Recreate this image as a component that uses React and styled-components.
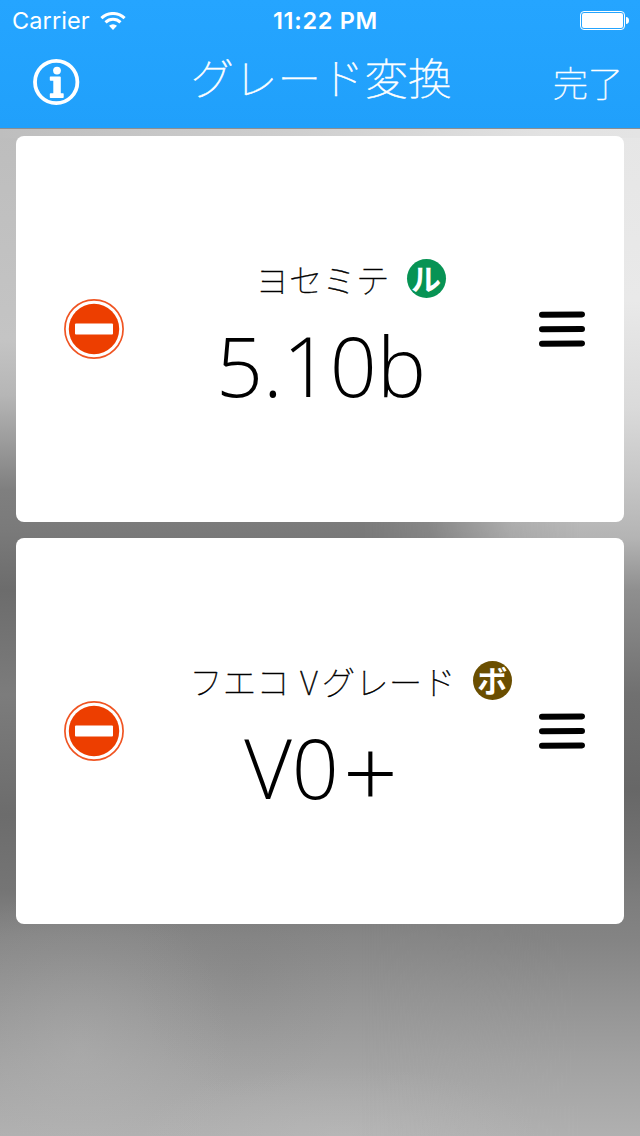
import React from "react";
import styled, { createGlobalStyle } from "styled-components";

const GlobalStyle = createGlobalStyle`
  * { box-sizing: border-box; }
  body { margin: 0; }
`;

const jp = `"Noto Sans CJK JP", sans-serif`;

const Screen = styled.div`
  position: relative;
  isolation: isolate;
  width: 640px;
  height: 1136px;
  overflow: hidden;
  background: linear-gradient(#bdbdbd 128px, #c4c4c4 340px, #b6b6b6 395px, #949494 455px, #7f7f7f 490px, #7a7a7a 530px, #6c6c6c 590px, #7c7c7c 695px, #6c6c6c 815px, #757575 890px, #868686 935px, #959595 1000px, #a2a2a2 1060px, #b0b0b0 1136px);
  &::before {
    content: "";
    position: absolute;
    inset: 0;
    z-index: -1;
    background: linear-gradient(#e6e6e6 128px, #e9e9e9 300px, #dadada 408px, #c6c6c6 481px, #b4b4b4 538px, #8f8f8f 590px, #707070 695px, #676767 789px, #727272 852px, #7e7e7e 904px, #848484 940px, #939393 1000px, #a1a1a1 1060px, #b0b0b0 1136px);
    mask-image: linear-gradient(90deg, transparent 360px, rgba(0, 0, 0, 0.2) 430px, rgba(0, 0, 0, 0.8) 510px, #000 580px);
  }
  &::after {
    content: "";
    position: absolute;
    inset: 0;
    z-index: -1;
    background:
      linear-gradient(90deg, #bebebe, #cecece 45%, #e2e2e2 85%, #e4e4e4) 0 128px / 100% 10px no-repeat,
      radial-gradient(150px 170px at 80px 1050px, rgba(190, 190, 190, 0.26), rgba(190, 190, 190, 0.08) 60%, transparent),
      radial-gradient(110px 130px at 245px 970px, rgba(110, 110, 110, 0.12), rgba(110, 110, 110, 0.04) 60%, transparent),
      radial-gradient(200px 70px at 340px 1136px, rgba(200, 200, 200, 0.25), transparent);
  }
`;

const Header = styled.header`
  height: 129px;
  color: #fff;
  background: linear-gradient(#25a5ff, #20a0fb);
  border-bottom: 1px solid #8b8f92;
`;

const StatusBar = styled.div`
  display: grid;
  grid-template-columns: 1fr auto 1fr;
  align-items: center;
  height: 40px;
  padding: 0 11px 0 12px;
  font: 400 23.5px/40px Inter, sans-serif;
`;

const Carrier = styled.div`
  display: flex;
  align-items: center;
  gap: 10px;
  padding-top: 1px;
  letter-spacing: 0.1px;
`;

const Clock = styled.div`
  padding: 1px 0 0 10px;
  font-weight: 600;
  letter-spacing: 0.7px;
`;

const StatusIcon = styled.svg`
  display: block;
  justify-self: end;
`;

const NavBar = styled.nav`
  display: grid;
  grid-template-columns: 120px 1fr 120px;
  align-items: center;
  height: 88px;
  padding: 0 17px 5px 32px;
`;

const Title = styled.h1`
  margin: 0;
  padding: 0 13px 9px 0;
  text-align: center;
  white-space: nowrap;
  font: 100 43.5px/60px ${jp};
  -webkit-text-stroke: 0.5px #fff;
`;

const NavButton = styled.button`
  justify-self: ${(p) => p.$side};
  padding: 0;
  border: 0;
  color: inherit;
  background: none;
  font: 100 35px/48px ${jp};
  -webkit-text-stroke: 0.4px #fff;
  svg { display: block; }
`;

const List = styled.main`
  display: flex;
  flex-direction: column;
  gap: 16px;
  padding: 7px 16px;
`;

const Card = styled.section`
  display: grid;
  grid-template-columns: 60px 1fr 48px;
  align-items: center;
  height: 386px;
  padding: 0 38px 0 48px;
  border-radius: 8px;
  background: #fff;
`;

const IconButton = styled.button`
  padding: 0;
  border: 0;
  background: none;
  svg { display: block; }
`;

const Grade = styled.div`
  display: flex;
  flex-direction: column;
  align-items: center;
  padding: 15px 16px 0 0;
`;

const SystemRow = styled.div`
  display: flex;
  align-items: center;
  gap: 17px;
  height: 40px;
  margin-left: 55px;
`;

const SystemName = styled.span`
  font: 100 33.5px/38px ${jp};
  font-kerning: none;
  word-spacing: 3px;
  white-space: pre;
  -webkit-text-stroke: 0.4px #000;
`;

const Latin = styled.span`
  letter-spacing: 4px;
`;

const Badge = styled.span`
  width: 39px;
  height: 39px;
  border-radius: 50%;
  text-align: center;
  color: #fff;
  background: ${(p) => p.$color};
  font: 700 30px/37px ${jp};
`;

const Value = styled.div`
  height: 100px;
  margin-top: 16px;
  padding-right: 4px;
  color: #000;
  font: 300 82.5px/100px "Open Sans", sans-serif;
`;

const Plus = styled.span`
  margin-left: 4px;
  font-size: 96px;
  line-height: 0;
  vertical-align: -9px;
`;

const grades = [
  { id: "yds", name: "ヨセミテ", mark: "ル", color: "#079354", value: "5.10b" },
  {
    id: "hueco",
    name: <>フエコ <Latin>V</Latin>グレード</>,
    mark: "ボ",
    color: "#6a4e00",
    value: <>V0<Plus>+</Plus></>,
  },
];

function Wifi() {
  return (
    <StatusIcon width="26" height="18" viewBox="0 0 26 18" fill="none" stroke="#fff" strokeWidth="3">
      <path d="M1.4 6.1a16.8 16.8 0 0 1 23.2 0" />
      <path d="M5.5 10.4a10.8 10.8 0 0 1 15 0" />
      <path d="M13 18l-4-4.2a5.8 5.8 0 0 1 8 0z" fill="#fff" stroke="none" />
    </StatusIcon>
  );
}

function Battery() {
  return (
    <StatusIcon width="49" height="19" viewBox="0 0 49 19" fill="#fff">
      <rect x=".5" y=".5" width="44" height="18" rx="3.5" fill="none" stroke="#fff" />
      <rect x="2" y="2" width="41" height="15" rx="2" />
      <path d="M46 6c2 0 3 1.5 3 3.5S48 13 46 13z" />
    </StatusIcon>
  );
}

function Info() {
  return (
    <svg width="48" height="48" viewBox="0 0 48 48" fill="#fff">
      <circle cx="24.2" cy="24" r="21.2" fill="none" stroke="#fff" strokeWidth="3.8" />
      <circle cx="25" cy="12.6" r="3.9" />
      <path d="M18.5 18.4h9.3q1 0 1 1v15.8h2.2q.7 0 .7.7v3.4q0 .7-.7.7H18.5q-.7 0-.7-.7v-3.4q0-.7.7-.7h2.8V22.8h-2.8q-.7 0-.7-.7v-3q0-.7.7-.7z" />
    </svg>
  );
}

function Remove() {
  return (
    <svg width="60" height="60" viewBox="0 0 60 60">
      <circle cx="30" cy="30" r="29.1" fill="#fff" stroke="#f05523" strokeWidth="1.7" />
      <circle cx="30" cy="30" r="25.2" fill="#ed3e00" />
      <rect x="11" y="24.5" width="38" height="11" rx="1" fill="#fff" />
    </svg>
  );
}

function Handle() {
  return (
    <svg width="48" height="36" viewBox="0 0 48 36" stroke="#000" strokeWidth="6" strokeLinecap="round">
      <path d="M4 3.8L44 3.4M4 18.3L44 18M4 32.8L44 32.4" />
    </svg>
  );
}

export default function App() {
  return (
    <Screen>
      <GlobalStyle />
      <Header>
        <StatusBar>
          <Carrier>Carrier<Wifi /></Carrier>
          <Clock>11:22 PM</Clock>
          <Battery />
        </StatusBar>
        <NavBar>
          <NavButton $side="start" aria-label="Info"><Info /></NavButton>
          <Title>グレード変換</Title>
          <NavButton $side="end">完了</NavButton>
        </NavBar>
      </Header>
      <List>
        {grades.map((g) => (
          <Card key={g.id}>
            <IconButton aria-label="Remove"><Remove /></IconButton>
            <Grade>
              <SystemRow>
                <SystemName>{g.name}</SystemName>
                <Badge $color={g.color}>{g.mark}</Badge>
              </SystemRow>
              <Value>{g.value}</Value>
            </Grade>
            <IconButton aria-label="Reorder"><Handle /></IconButton>
          </Card>
        ))}
      </List>
    </Screen>
  );
}
